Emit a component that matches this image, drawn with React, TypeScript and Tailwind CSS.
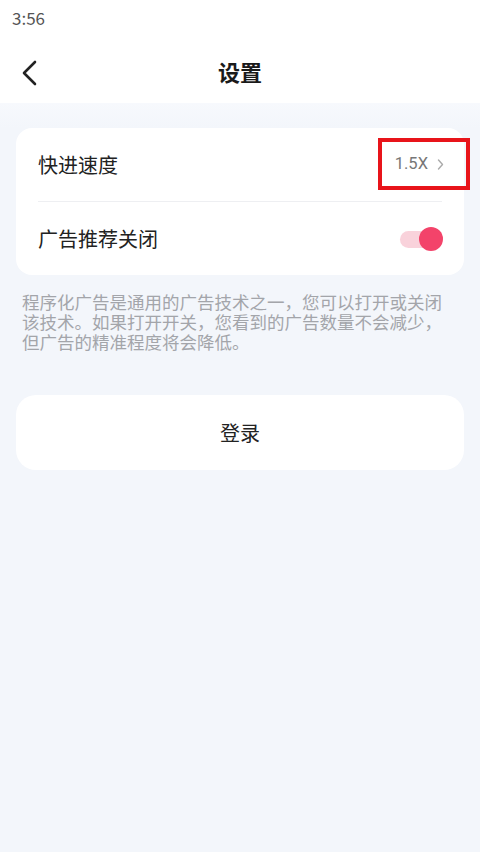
import { useState } from "react"

const font = { fontFamily: '"Noto Sans CJK SC", "Noto Sans", sans-serif' }

function Toggle({ on, onChange }: { on: boolean; onChange: () => void }) {
  return (
    <button
      type="button"
      onClick={onChange}
      className="relative h-[24px] w-[44px] shrink-0"
      aria-pressed={on}
    >
      <span className="absolute left-[1px] top-[4px] h-[17px] w-[36px] rounded-full bg-[#f9d2db]" />
      <span className="absolute right-0 top-0 h-[24px] w-[24px] rounded-full bg-[#f3436a]" />
    </button>
  )
}

export default function App() {
  const [adsOff, setAdsOff] = useState(true)

  return (
    <div className="flex min-h-[852px] w-[480px] flex-col bg-[#f3f6fb]" style={font}>
      <div className="bg-white">
        <div className="flex h-[36px] items-center px-[12px] text-[17px] text-[#555]">3:56</div>
        <div className="relative flex h-[67px] items-center justify-center pt-[4px]">
          <button type="button" className="absolute left-[20px] top-[24px]">
            <svg width="20" height="26" viewBox="0 0 20 26" fill="none">
              <path d="M15 2 L4 13 L15 24" stroke="#222" strokeWidth="2.6" strokeLinecap="round" strokeLinejoin="round" />
            </svg>
          </button>
          <h1 className="text-[22px] font-bold text-[#1a1a1a]">设置</h1>
        </div>
      </div>

      <div className="h-[25px] bg-gradient-to-b from-[#f7f9fd] to-[#f3f6fb]" />

      <div className="mx-[16px] rounded-[16px] bg-white">
        <div className="relative flex h-[73px] items-center justify-between pl-[22px] pr-[20px]">
          <span className="text-[20px] text-[#222]">快进速度</span>
          <div className="flex items-center gap-[9px]">
            <span className="text-[16.5px] text-[#777]" style={{ fontFamily: 'Roboto, "Noto Sans", sans-serif' }}>
              1.5X
            </span>
            <svg width="7" height="11" viewBox="0 0 7 11" fill="none">
              <path d="M1.5 1 L5.5 5.5 L1.5 10" stroke="#aaa" strokeWidth="1.4" strokeLinecap="round" strokeLinejoin="round" />
            </svg>
          </div>
          <div className="pointer-events-none absolute left-[362px] top-[10px] h-[52px] w-[92px] border-[4px] border-[#e8141a]" />
        </div>
        <div className="mx-[22px] h-px bg-[#eeeff2]" />
        <div className="flex h-[73px] items-center justify-between pl-[22px] pr-[21px]">
          <span className="text-[20px] text-[#222]">广告推荐关闭</span>
          <Toggle on={adsOff} onChange={() => setAdsOff(!adsOff)} />
        </div>
      </div>

      <p className="mx-[22px] mt-[17px] text-[17.5px] leading-[20px] text-[#a3a5aa]">
        程序化广告是通用的广告技术之一，您可以打开或关闭该技术。如果打开开关，您看到的广告数量不会减少，但广告的精准程度将会降低。
      </p>

      <button
        type="button"
        className="mx-[16px] mt-[43px] flex h-[75px] items-center justify-center rounded-[20px] bg-white text-[20px] text-[#222]"
      >
        登录
      </button>
    </div>
  )
}
